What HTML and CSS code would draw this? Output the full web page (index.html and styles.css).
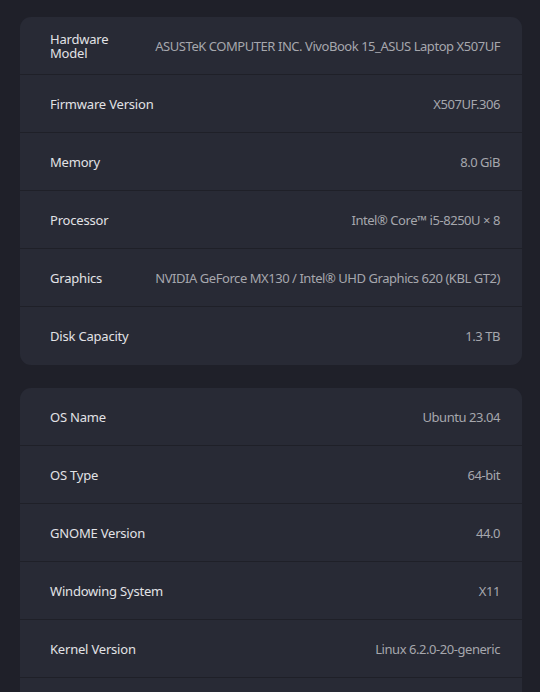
FILE: index.html
```html
<!DOCTYPE html>
<html lang="en">
<head>
    <meta charset="UTF-8">
    <meta name="viewport" content="width=device-width, initial-scale=1.0">
    <title>About</title>
    <link rel="stylesheet" href="styles.css">
</head>
<body>

    <div class="page">
        <div class="card">
            <div class="row">
                <span class="label">Hardware Model</span>
                <span class="value">ASUSTeK COMPUTER INC. VivoBook 15_ASUS Laptop X507UF</span>
            </div>
            <div class="row">
                <span class="label">Firmware Version</span>
                <span class="value">X507UF.306</span>
            </div>
            <div class="row">
                <span class="label">Memory</span>
                <span class="value">8.0 GiB</span>
            </div>
            <div class="row">
                <span class="label">Processor</span>
                <span class="value">Intel® Core™ i5-8250U × 8</span>
            </div>
            <div class="row">
                <span class="label">Graphics</span>
                <span class="value">NVIDIA GeForce MX130 / Intel® UHD Graphics 620 (KBL GT2)</span>
            </div>
            <div class="row">
                <span class="label">Disk Capacity</span>
                <span class="value">1.3 TB</span>
            </div>
        </div>

        <div class="card">
            <div class="row">
                <span class="label">OS Name</span>
                <span class="value">Ubuntu 23.04</span>
            </div>
            <div class="row">
                <span class="label">OS Type</span>
                <span class="value">64-bit</span>
            </div>
            <div class="row">
                <span class="label">GNOME Version</span>
                <span class="value">44.0</span>
            </div>
            <div class="row">
                <span class="label">Windowing System</span>
                <span class="value">X11</span>
            </div>
            <div class="row">
                <span class="label">Kernel Version</span>
                <span class="value">Linux 6.2.0-20-generic</span>
            </div>
            <!-- next row is scrolled out of view -->
            <div class="row"></div>
        </div>
    </div>

</body>
</html>
```

FILE: styles.css
```css
html, body {
    margin: 0;
    padding: 0;
    height: 100%;
    overflow: hidden;
}
body {
    font-family: "Noto Sans", "Open Sans", sans-serif;
    font-size: 13px;
    background-color: #1f2029;
    color: #e6e6e9;
}
.page {
    display: flex;
    flex-direction: column;
    gap: 23px;
    padding: 17px 18px 0 20px;
}
.card {
    background-color: #282a35;
    border-radius: 11px;
    display: flex;
    flex-direction: column;
}
.row {
    box-sizing: border-box;
    height: 58px;
    display: flex;
    align-items: center;
    gap: 12px;
    padding: 0 22px 0 30px;
    border-bottom: 1px solid #1f2028;
}
.row:last-child {
    border-bottom: none;
}
.label {
    flex: 1 1 auto;
    line-height: 14px;
    letter-spacing: -0.2px;
    color: #e2e2e6;
}
.value {
    flex: 0 0 auto;
    white-space: nowrap;
    color: #a6a7ad;
    letter-spacing: -0.45px;
}
```
